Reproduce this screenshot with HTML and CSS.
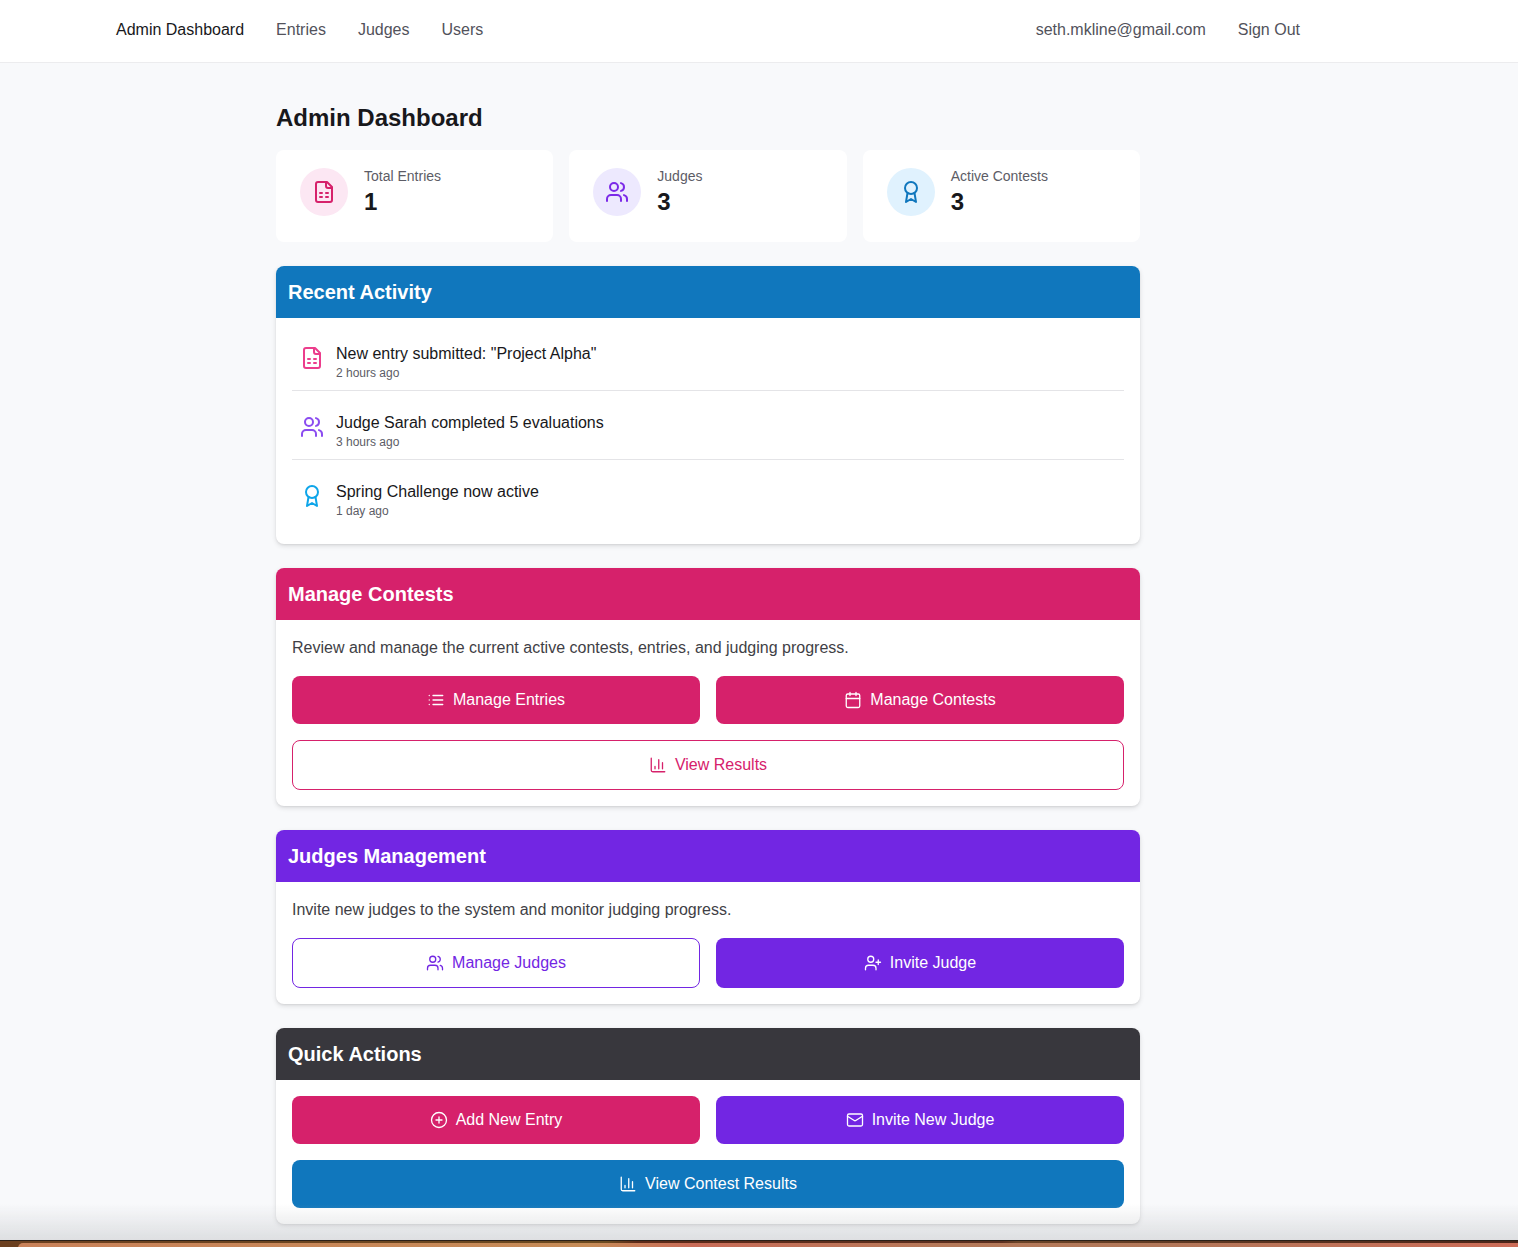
FILE: index.html
```html
<!DOCTYPE html>
<html lang="en">
<head>
    <meta charset="UTF-8">
    <meta name="viewport" content="width=device-width, initial-scale=1.0">
    <title>Admin Dashboard</title>
    <link rel="stylesheet" href="styles.css">
</head>
<body>
    <svg class="sprite" aria-hidden="true">
        <symbol id="i-file" viewBox="0 0 24 24"><path d="M15 2H6a2 2 0 0 0-2 2v16a2 2 0 0 0 2 2h12a2 2 0 0 0 2-2V7Z"/><path d="M14 2v4a2 2 0 0 0 2 2h4"/><path d="M8 13h2M14 13h2M8 17h2M14 17h2"/></symbol>
        <symbol id="i-users" viewBox="0 0 24 24"><path d="M16 21v-2a4 4 0 0 0-4-4H6a4 4 0 0 0-4 4v2"/><circle cx="9" cy="7" r="4"/><path d="M22 21v-2a4 4 0 0 0-3-3.87"/><path d="M16 3.13a4 4 0 0 1 0 7.75"/></symbol>
        <symbol id="i-award" viewBox="0 0 24 24"><path d="M15.477 12.89 17 22l-5-3-5 3 1.523-9.11"/><circle cx="12" cy="8" r="6"/></symbol>
        <symbol id="i-list" viewBox="0 0 24 24"><path d="M8 6h13M8 12h13M8 18h13M3 6h.01M3 12h.01M3 18h.01"/></symbol>
        <symbol id="i-calendar" viewBox="0 0 24 24"><path d="M8 2v4M16 2v4"/><rect x="3" y="4" width="18" height="18" rx="2"/><path d="M3 10h18"/></symbol>
        <symbol id="i-chart" viewBox="0 0 24 24"><path d="M3 3v16a2 2 0 0 0 2 2h16"/><path d="M18 17V9M13 17V5M8 17v-3"/></symbol>
        <symbol id="i-user-plus" viewBox="0 0 24 24"><path d="M16 21v-2a4 4 0 0 0-4-4H6a4 4 0 0 0-4 4v2"/><circle cx="9" cy="7" r="4"/><path d="M19 8v6M22 11h-6"/></symbol>
        <symbol id="i-plus" viewBox="0 0 24 24"><circle cx="12" cy="12" r="10"/><path d="M8 12h8M12 8v8"/></symbol>
        <symbol id="i-mail" viewBox="0 0 24 24"><rect x="2" y="4" width="20" height="16" rx="2"/><path d="m22 7-8.97 5.7a1.94 1.94 0 0 1-2.06 0L2 7"/></symbol>
    </svg>

    <nav class="navbar">
        <div class="nav-inner">
            <div class="nav-links">
                <a class="active" href="#">Admin Dashboard</a>
                <a href="#">Entries</a>
                <a href="#">Judges</a>
                <a href="#">Users</a>
            </div>
            <div class="nav-links">
                <span class="nav-email">seth.mkline@gmail.com</span>
                <a href="#">Sign Out</a>
            </div>
        </div>
    </nav>

    <main class="content">
        <h1>Admin Dashboard</h1>

        <div class="stats">
            <div class="stat">
                <div class="stat-icon bg-pink"><svg class="icon-24 pink"><use href="#i-file"/></svg></div>
                <div>
                    <p class="stat-label">Total Entries</p>
                    <p class="stat-value">1</p>
                </div>
            </div>
            <div class="stat">
                <div class="stat-icon bg-purple"><svg class="icon-24 purple"><use href="#i-users"/></svg></div>
                <div>
                    <p class="stat-label">Judges</p>
                    <p class="stat-value">3</p>
                </div>
            </div>
            <div class="stat">
                <div class="stat-icon bg-blue"><svg class="icon-24 blue"><use href="#i-award"/></svg></div>
                <div>
                    <p class="stat-label">Active Contests</p>
                    <p class="stat-value">3</p>
                </div>
            </div>
        </div>

        <section class="panel">
            <h2 class="panel-head head-blue">Recent Activity</h2>
            <div class="panel-body">
                <div class="activity">
                    <svg class="icon-24 light-pink"><use href="#i-file"/></svg>
                    <div>
                        <p class="activity-title">New entry submitted: "Project Alpha"</p>
                        <p class="activity-time">2 hours ago</p>
                    </div>
                </div>
                <div class="activity">
                    <svg class="icon-24 light-purple"><use href="#i-users"/></svg>
                    <div>
                        <p class="activity-title">Judge Sarah completed 5 evaluations</p>
                        <p class="activity-time">3 hours ago</p>
                    </div>
                </div>
                <div class="activity">
                    <svg class="icon-24 light-blue"><use href="#i-award"/></svg>
                    <div>
                        <p class="activity-title">Spring Challenge now active</p>
                        <p class="activity-time">1 day ago</p>
                    </div>
                </div>
            </div>
        </section>

        <section class="panel">
            <h2 class="panel-head head-pink">Manage Contests</h2>
            <div class="panel-body">
                <p class="panel-text">Review and manage the current active contests, entries, and judging progress.</p>
                <div class="btn-grid">
                    <a class="btn btn-pink" href="#"><svg class="icon-18"><use href="#i-list"/></svg>Manage Entries</a>
                    <a class="btn btn-pink" href="#"><svg class="icon-18"><use href="#i-calendar"/></svg>Manage Contests</a>
                    <a class="btn btn-wide btn-outline-pink" href="#"><svg class="icon-18"><use href="#i-chart"/></svg>View Results</a>
                </div>
            </div>
        </section>

        <section class="panel">
            <h2 class="panel-head head-purple">Judges Management</h2>
            <div class="panel-body">
                <p class="panel-text">Invite new judges to the system and monitor judging progress.</p>
                <div class="btn-grid">
                    <a class="btn btn-outline-purple" href="#"><svg class="icon-18"><use href="#i-users"/></svg>Manage Judges</a>
                    <a class="btn btn-purple btn-tall" href="#"><svg class="icon-18"><use href="#i-user-plus"/></svg>Invite Judge</a>
                </div>
            </div>
        </section>

        <section class="panel">
            <h2 class="panel-head head-dark">Quick Actions</h2>
            <div class="panel-body">
                <div class="btn-grid">
                    <a class="btn btn-pink" href="#"><svg class="icon-18"><use href="#i-plus"/></svg>Add New Entry</a>
                    <a class="btn btn-purple" href="#"><svg class="icon-18"><use href="#i-mail"/></svg>Invite New Judge</a>
                    <a class="btn btn-wide btn-blue" href="#"><svg class="icon-18"><use href="#i-chart"/></svg>View Contest Results</a>
                </div>
            </div>
        </section>
    </main>

    <!-- window edge and desktop strip along the bottom of the capture -->
    <div class="window-fade"></div>
    <div class="desktop-strip"><div class="desktop-inner"></div></div>
</body>
</html>
```

FILE: styles.css
```css
* {
    box-sizing: border-box;
}
html, body {
    height: 1247px;
    overflow: hidden;
}
body {
    margin: 0;
    background-color: #f8f9fb;
    color: #18181b;
    font-family: "Liberation Sans", Arial, sans-serif;
    font-size: 16px;
    line-height: 24px;
}
p, h1, h2 {
    margin: 0;
}
a {
    color: inherit;
    text-decoration: none;
}
.sprite {
    display: none;
}
svg {
    fill: none;
    stroke: currentColor;
    stroke-width: 2;
    stroke-linecap: round;
    stroke-linejoin: round;
    flex-shrink: 0;
}
.icon-24 { width: 24px; height: 24px; }
.icon-18 { width: 18px; height: 18px; stroke-width: 1.75; }

.pink { color: #d6216b; }
.purple { color: #7c2ae8; }
.blue { color: #1077bd; }
.light-pink { color: #ec3d8c; }
.light-purple { color: #8b4cf0; }
.light-blue { color: #0ea5e9; }
.bg-pink { background-color: #fce7f3; }
.bg-purple { background-color: #ede9fe; }
.bg-blue { background-color: #e0f2fe; }

.navbar {
    height: 63px;
    background-color: #fff;
    border-bottom: 1px solid #ececee;
}
.nav-inner {
    width: 1216px;
    height: 100%;
    margin-left: 100px;
    padding: 0 16px;
    display: flex;
    align-items: center;
    justify-content: space-between;
}
.nav-links {
    display: flex;
    gap: 32px;
    color: #52525b;
    padding-bottom: 3px;
}
.nav-links .active {
    color: #18181b;
}

.content {
    width: 864px;
    margin-left: 276px;
    padding-top: 39px;
}
h1 {
    font-size: 24px;
    line-height: 32px;
    font-weight: 700;
    margin-bottom: 16px;
}

.stats {
    display: grid;
    grid-template-columns: repeat(3, 1fr);
    gap: 16px;
    margin-bottom: 24px;
}
.stat {
    height: 92px;
    padding: 18px 24px;
    display: flex;
    gap: 16px;
    background-color: #fff;
    border-radius: 8px;
}
.stat-icon {
    width: 48px;
    height: 48px;
    border-radius: 50%;
    display: flex;
    align-items: center;
    justify-content: center;
}
.stat-label {
    font-size: 14px;
    line-height: 16px;
    color: #5c5c66;
}
.stat-value {
    font-size: 24px;
    line-height: 32px;
    font-weight: 700;
    margin-top: 2px;
}

.panel {
    margin-bottom: 24px;
    background-color: #fff;
    border-radius: 8px;
    overflow: hidden;
    box-shadow: 0 2px 5px rgba(0, 0, 0, 0.12), 0 1px 2px rgba(0, 0, 0, 0.06);
}
.panel-head {
    height: 52px;
    padding: 0 12px;
    font-size: 20px;
    line-height: 52px;
    font-weight: 700;
    color: #fff;
}
.head-blue { background-color: #1077bd; }
.head-pink { background-color: #d6216b; }
.head-purple { background-color: #7226e3; }
.head-dark { background-color: #38373d; }
.panel-body {
    padding: 16px;
}
.panel-text {
    color: #3f3f46;
    margin-bottom: 16px;
}

.activity {
    display: flex;
    gap: 12px;
    padding: 8px 8px 9px;
    margin-top: 12px;
    border-bottom: 1px solid #e4e4e7;
}
.activity:first-child {
    margin-top: 0;
}
.activity:last-child {
    border-bottom: none;
}
.activity svg {
    margin-top: 4px;
}
.activity-title {
    color: #18181b;
}
.activity-time {
    font-size: 12px;
    line-height: 16px;
    margin-top: -1px;
    color: #5c5c66;
}

.btn-grid {
    display: grid;
    grid-template-columns: 1fr 1fr;
    gap: 16px;
}
.btn {
    height: 48px;
    padding-bottom: 1px;
    display: flex;
    align-items: center;
    justify-content: center;
    gap: 8px;
    border-radius: 8px;
    font-weight: 500;
    color: #fff;
}
.btn-wide {
    grid-column: span 2;
}
.btn-tall {
    height: 50px;
}
.btn-pink { background-color: #d6216b; }
.btn-purple { background-color: #7226e3; }
.btn-blue { background-color: #1077bd; }
.btn-outline-pink {
    height: 50px;
    background-color: #fff;
    border: 1px solid #d6216b;
    color: #d6216b;
}
.btn-outline-purple {
    height: 50px;
    background-color: #fff;
    border: 1px solid #7226e3;
    color: #7226e3;
}

.window-fade {
    position: fixed;
    left: 0;
    right: 0;
    bottom: 7px;
    height: 36px;
    background: linear-gradient(to bottom, rgba(200, 202, 205, 0), rgba(200, 202, 205, 0.55));
}
.desktop-strip {
    position: fixed;
    left: 0;
    right: 0;
    bottom: 0;
    height: 7px;
    padding-top: 2px;
    border-top: 1px solid #2a2018;
    background: linear-gradient(to right, #6b3f1f, #6b4a20 40%, #5c2a18 42%, #5c3020 66%, #6a4428 67%, #4a2418);
}
.desktop-inner {
    height: 5px;
    margin-left: 18px;
    border-top-left-radius: 6px;
    background: linear-gradient(to right, #c9825a, #c68c58 38%, #c96c58 45%, #b57a5a 62%, #b2785a 76%, #cc6c58);
}
```
